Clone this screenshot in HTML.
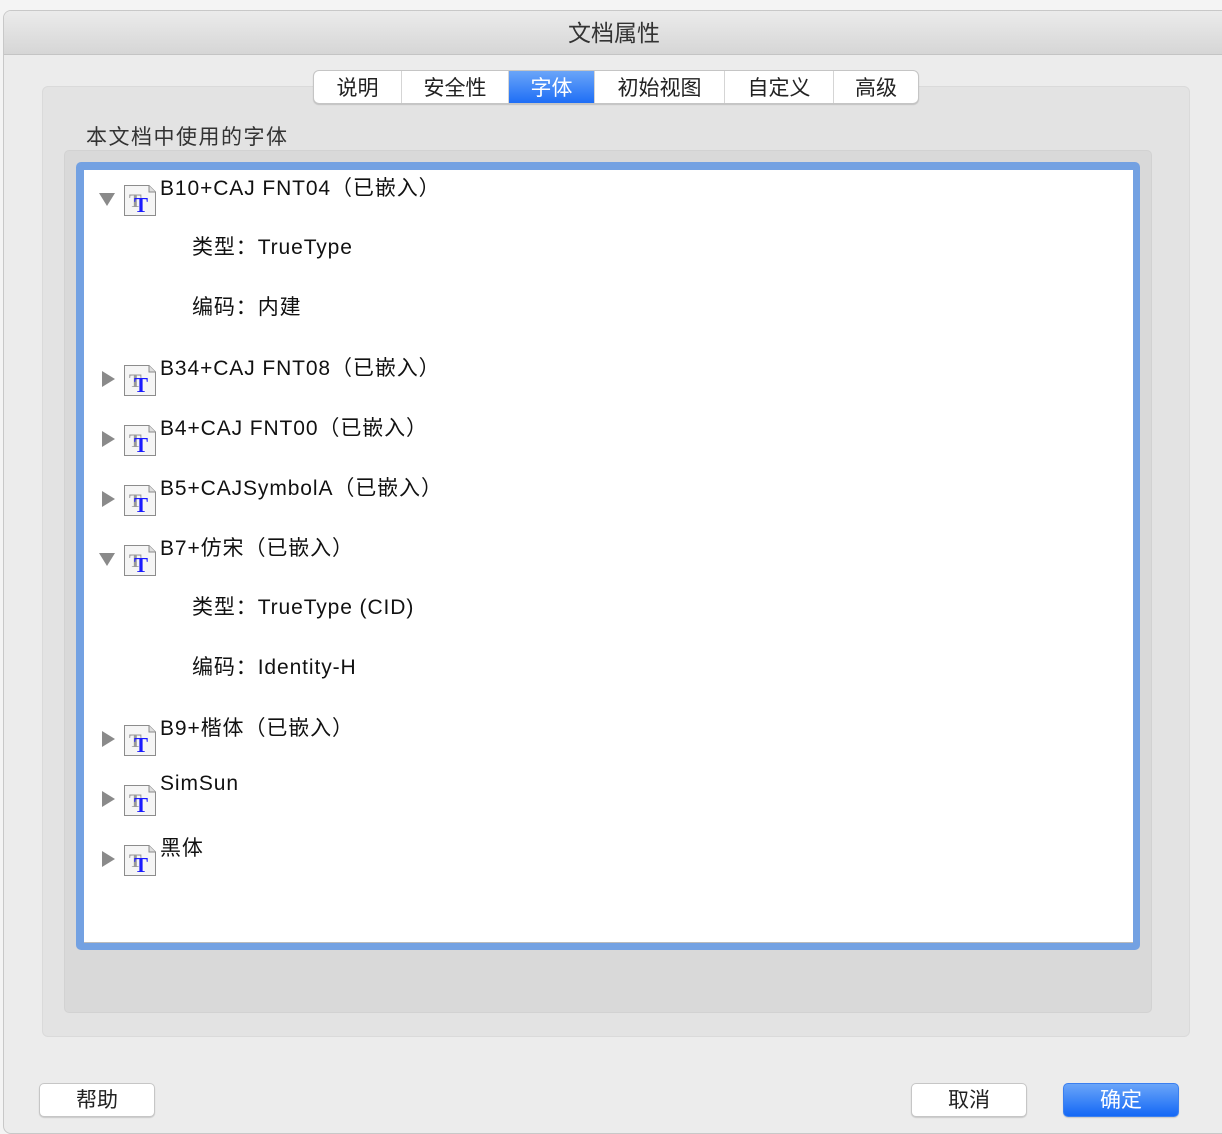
<!DOCTYPE html>
<html><head><meta charset="utf-8"><style>
*{margin:0;padding:0;box-sizing:border-box}
body{width:1222px;height:1134px;background:#f4f4f4;position:relative;overflow:hidden;font-family:"Liberation Sans","Noto Sans CJK SC",sans-serif;color:#222}
.win{position:absolute;left:3px;top:10px;width:1222px;height:1124px;background:#ececec;border-radius:8px 0 0 8px;border:1px solid #c8c8c8;overflow:hidden}
.title{height:44px;background:linear-gradient(#ebebeb,#d6d6d6);border-bottom:1px solid #c4c4c4;text-align:center;font-size:23px;line-height:44px;color:#333}
.grp{position:absolute;left:42px;top:86px;width:1148px;height:951px;background:#e3e3e3;border:1px solid #dadada;border-radius:6px}
.tabs{position:absolute;left:313px;top:70px;height:34px;display:flex;background:#fff;border:1px solid #c5c5c5;border-radius:6px;overflow:hidden;box-shadow:0 1px 1px rgba(0,0,0,.15)}
.tabs div{font-size:21px;line-height:35px;text-align:center;border-right:1px solid #d5d5d5;color:#222}
.tabs div:last-child{border-right:none}
.tabs .on{background:linear-gradient(#6aa5f8,#1e6ef6);color:#fff}
.lbl{position:absolute;left:86px;top:121px;font-size:21px;letter-spacing:1.5px;color:#333}
.inner{position:absolute;left:64px;top:150px;width:1088px;height:863px;background:#d9d9d9;border-radius:5px;border:1px solid #d2d2d2}
.frame{position:absolute;left:76px;top:162px;width:1064px;height:788px;background:#73a1e2;border-radius:5px}
.list{position:absolute;left:84px;top:170px;width:1049px;height:773px;background:#fff;border-bottom:1px solid #bbb}
.row{position:absolute;left:0;height:40px;font-size:21px;letter-spacing:0.9px}
.tri{position:absolute;width:0;height:0}
.down{left:15px;top:23px;border-left:8px solid transparent;border-right:8px solid transparent;border-top:13px solid #8a8a8a}
.right{left:18px;top:21px;border-top:8px solid transparent;border-bottom:8px solid transparent;border-left:13px solid #8a8a8a}
.ic{position:absolute;left:40px;top:15px;width:32px;height:31px}
.t{position:absolute;left:76px;top:2px;white-space:nowrap;color:#111}
.sub{position:absolute;left:108px;font-size:21px;letter-spacing:0.9px;color:#111;white-space:nowrap}
.btn{position:absolute;top:1083px;height:34px;width:116px;background:#fff;border:1px solid #c6c6c6;border-radius:5px;font-size:21px;line-height:34px;text-align:center;box-shadow:0 1px 1px rgba(0,0,0,.15)}
.ok{background:linear-gradient(#6aa5f8,#1468f6);color:#fff;border-color:#3a7ff0}
</style></head><body>
<div class="win"><div class="title">文档属性</div></div>
<div class="grp"></div>
<div class="tabs">
<div style="width:88px">说明</div><div style="width:107px">安全性</div><div class="on" style="width:86px">字体</div><div style="width:130px">初始视图</div><div style="width:109px">自定义</div><div style="width:84px">高级</div>
</div>
<div class="lbl">本文档中使用的字体</div>
<div class="inner"></div>
<div class="frame"></div>
<div class="list">
<svg width="0" height="0" style="position:absolute"><defs><symbol id="ic" viewBox="0 0 32 31"><path d="M0.5 0.5H25L31.5 7V30.5H0.5Z" fill="#f5f5f5" stroke="#8c8c8c"/><path d="M25 0.5V7H31.5" fill="#ddd" stroke="#8c8c8c"/><text x="5" y="22" font-family="Liberation Serif,serif" font-weight="bold" font-size="19" fill="#999">T</text><text x="10" y="27" font-family="Liberation Serif,serif" font-weight="bold" font-size="21" fill="#1a1aff">T</text></symbol></defs></svg>
<div class="row" style="top:0"><div class="tri down"></div><svg class="ic"><use href="#ic"/></svg><div class="t">B10+CAJ FNT04（已嵌入）</div></div>
<div class="sub" style="top:61px">类型：TrueType</div>
<div class="sub" style="top:121px">编码：内建</div>
<div class="row" style="top:180px"><div class="tri right"></div><svg class="ic"><use href="#ic"/></svg><div class="t">B34+CAJ FNT08（已嵌入）</div></div>
<div class="row" style="top:240px"><div class="tri right"></div><svg class="ic"><use href="#ic"/></svg><div class="t">B4+CAJ FNT00（已嵌入）</div></div>
<div class="row" style="top:300px"><div class="tri right"></div><svg class="ic"><use href="#ic"/></svg><div class="t">B5+CAJSymbolA（已嵌入）</div></div>
<div class="row" style="top:360px"><div class="tri down"></div><svg class="ic"><use href="#ic"/></svg><div class="t">B7+仿宋（已嵌入）</div></div>
<div class="sub" style="top:421px">类型：TrueType (CID)</div>
<div class="sub" style="top:481px">编码：Identity-H</div>
<div class="row" style="top:540px"><div class="tri right"></div><svg class="ic"><use href="#ic"/></svg><div class="t">B9+楷体（已嵌入）</div></div>
<div class="row" style="top:600px"><div class="tri right"></div><svg class="ic"><use href="#ic"/></svg><div class="t">SimSun</div></div>
<div class="row" style="top:660px"><div class="tri right"></div><svg class="ic"><use href="#ic"/></svg><div class="t">黑体</div></div>
</div>
<div class="btn" style="left:39px">帮助</div>
<div class="btn" style="left:911px">取消</div>
<div class="btn ok" style="left:1063px">确定</div>
</body></html>
